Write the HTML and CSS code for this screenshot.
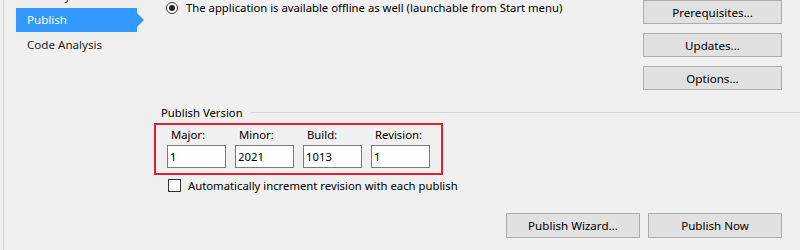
FILE: index.html
```html
<!DOCTYPE html>
<html lang="en">
<head>
  <meta charset="UTF-8">
  <title>Publish</title>
  <link rel="stylesheet" href="styles.css">
</head>
<body>

  <div class="window">
    <nav class="sidebar">
      <ul class="tabs">
        <li>Security</li>
        <li class="active">Publish</li>
        <li>Code Analysis</li>
      </ul>
    </nav>

    <main class="main">
      <div class="top">
        <label class="radio-row">
          <span class="radio checked"></span>
          The application is available offline as well (launchable from Start menu)
        </label>
        <div class="side-buttons">
          <button class="btn">Prerequisites...</button>
          <button class="btn">Updates...</button>
          <button class="btn">Options...</button>
        </div>
      </div>

      <div class="group-title">
        <span>Publish Version</span>
        <span class="rule"></span>
      </div>

      <div class="version-box">
        <div class="field">
          <label for="major">Major:</label>
          <input type="text" id="major" value="1">
        </div>
        <div class="field">
          <label for="minor">Minor:</label>
          <input type="text" id="minor" value="2021">
        </div>
        <div class="field">
          <label for="build">Build:</label>
          <input type="text" id="build" value="1013">
        </div>
        <div class="field">
          <label for="revision">Revision:</label>
          <input type="text" id="revision" value="1">
        </div>
      </div>

      <label class="check-row">
        <span class="checkbox"></span>
        Automatically increment revision with each publish
      </label>

      <div class="actions">
        <button class="btn wide">Publish Wizard...</button>
        <button class="btn wide">Publish Now</button>
      </div>
    </main>
  </div>

</body>
</html>
```

FILE: styles.css
```css
* {
  box-sizing: border-box;
}
body {
  margin: 0;
  background: #f0f0f0;
  font-family: 'Segoe UI', 'Noto Sans', sans-serif;
  font-size: 11.3px;
  color: #000;
  overflow: hidden;
}
.window {
  display: flex;
  height: 250px;
}

/* sidebar */
.sidebar {
  width: 147px;
  margin-left: 3px;
  border-left: 1px solid #d4d4d4;
  padding-left: 12px;
  flex-shrink: 0;
}
.tabs {
  list-style: none;
  margin: -16px 0 0 0;
  padding: 0;
  font-size: 11.6px;
}
.tabs li {
  position: relative;
  width: 121px;
  height: 24px;
  line-height: 24px;
  padding-left: 11px;
  color: #1e1e1e;
}
.tabs li:last-child {
  margin-top: 1px;
}
.tabs li.active {
  background: #3399ff;
  color: #fff;
}
.tabs li.active::after {
  content: "";
  position: absolute;
  right: -7px;
  top: 5px;
  border-left: 7px solid #3399ff;
  border-top: 7px solid transparent;
  border-bottom: 7px solid transparent;
}

/* main area */
.main {
  flex: 1;
  padding-right: 18px;
}
.top {
  display: flex;
  justify-content: space-between;
}
.radio-row {
  display: flex;
  align-items: center;
  height: 15px;
  margin-left: 16px;
  gap: 8px;
}
.radio {
  width: 12px;
  height: 12px;
  border: 1px solid #333;
  border-radius: 50%;
  background: #fff;
  display: flex;
  align-items: center;
  justify-content: center;
}
.radio.checked::after {
  content: "";
  width: 6px;
  height: 6px;
  border-radius: 50%;
  background: #222;
}
.side-buttons {
  display: flex;
  flex-direction: column;
  gap: 9px;
  width: 139px;
}
.btn {
  font-family: inherit;
  font-size: 11.6px;
  color: #000;
  background: #e1e1e1;
  border: 1px solid #adadad;
  height: 24px;
  padding: 0;
}
.btn.wide {
  width: 134px;
  height: 25px;
}

/* publish version */
.group-title {
  display: flex;
  align-items: center;
  height: 16px;
  margin: 14px 0 0 11px;
  gap: 8px;
}
.group-title .rule {
  flex: 1;
  height: 1px;
  background: #d5d5d5;
  margin-right: -18px;
}
.version-box {
  display: flex;
  gap: 9px;
  width: 289px;
  margin: 3px 0 0 4px;
  border: 2px solid #e0202e;
  padding: 2px 12px 5px 11px;
}
.field label {
  display: block;
  height: 16px;
  line-height: 16px;
  padding-left: 4px;
  margin-bottom: 2px;
}
.field input {
  width: 59px;
  height: 23px;
  border: 1px solid #7a7a7a;
  background: #fff;
  font-family: inherit;
  font-size: 11.3px;
  padding: 0 2px;
  color: #000;
}
.check-row {
  display: flex;
  align-items: center;
  height: 16px;
  margin: 2px 0 0 18px;
  gap: 7px;
}
.checkbox {
  width: 13px;
  height: 13px;
  border: 1px solid #333;
  background: #fff;
}

.actions {
  display: flex;
  justify-content: flex-end;
  gap: 8px;
  margin-top: 20px;
}
```
